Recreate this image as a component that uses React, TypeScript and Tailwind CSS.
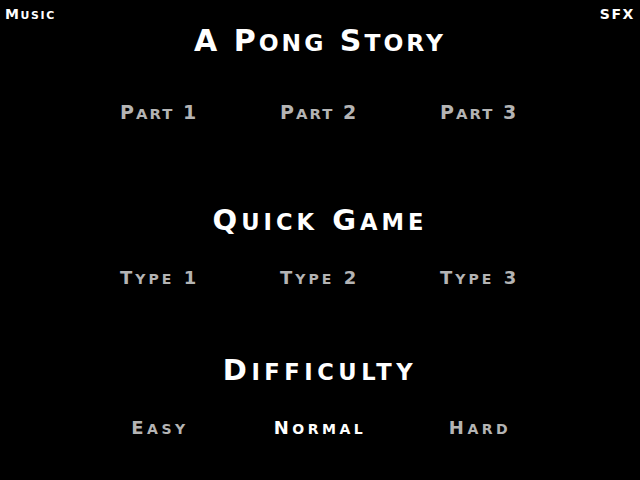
import React from "react";

// fake copperplate-style small caps: lowercase letters drawn as smaller capitals
function SC({ text }: { text: string }) {
  return (
    <>
      {text.split("").map((c, i) =>
        c !== c.toUpperCase() ? (
          <span key={i} className="text-[0.78em]">
            {c.toUpperCase()}
          </span>
        ) : (
          <span key={i}>{c}</span>
        )
      )}
    </>
  );
}

const font = "font-['DejaVu_Sans',sans-serif] font-bold leading-none";

function Row({
  items,
  size,
  left,
  active,
}: {
  items: string[];
  size: string;
  left?: boolean;
  active?: string;
}) {
  return (
    <div className={`grid grid-cols-3 w-[480px] mx-auto ${size}`}>
      {items.map((item) => (
        <div key={item} className="flex justify-center">
          <button
            type="button"
            className={`${left ? "w-[80px] text-left" : ""} whitespace-nowrap leading-none ${
              item === active ? "text-white" : "text-[#b4b4b4]"
            }`}
          >
            <SC text={item} />
          </button>
        </div>
      ))}
    </div>
  );
}

export default function App() {
  return (
    <div className={`w-[640px] h-[480px] bg-black text-white overflow-hidden ${font}`}>
      <div className="flex justify-between px-[5px] pt-[7px] text-[14px] tracking-[1.6px]">
        <span>
          <SC text="Music" />
        </span>
        <span>
          <SC text="SFX" />
        </span>
      </div>

      <h1 className="mt-[4px] text-center text-[30px] tracking-[3px]">
        <SC text="A Pong Story" />
      </h1>
      <div className="mt-[47px] tracking-[2px]">
        <Row items={["Part 1", "Part 2", "Part 3"]} size="text-[19px]" left />
      </div>

      <h2 className="mt-[84px] text-center text-[29px] tracking-[4px]">
        <SC text="Quick Game" />
      </h2>
      <div className="mt-[34px] tracking-[3px]">
        <Row items={["Type 1", "Type 2", "Type 3"]} size="text-[18px]" left />
      </div>

      <h2 className="mt-[69px] text-center text-[29px] tracking-[4.5px]">
        <SC text="Difficulty" />
      </h2>
      <div className="mt-[34px] tracking-[3.5px]">
        <Row items={["Easy", "Normal", "Hard"]} size="text-[18px]" active="Normal" />
      </div>
    </div>
  );
}
